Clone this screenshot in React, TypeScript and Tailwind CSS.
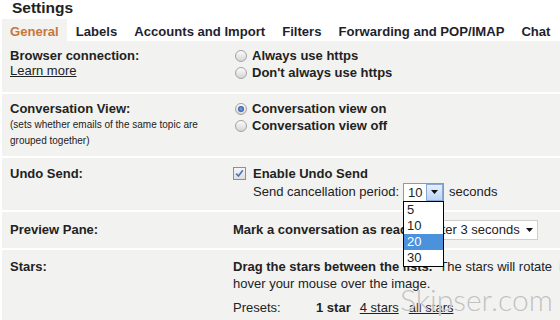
import React from "react";

const tabs = ["General", "Labels", "Accounts and Import", "Filters", "Forwarding and POP/IMAP", "Chat"];

function Radio({ checked }: { checked?: boolean }) {
  return (
    <span className="ml-[2px] mr-[5px] flex h-[12px] w-[12px] shrink-0 items-center justify-center rounded-full border border-[#a3a3a3] bg-linear-to-b from-[#fbfbfb] to-[#d6d6d6]">
      {checked && <span className="h-[6px] w-[6px] rounded-full bg-radial from-[#7fa9e6] to-[#173c84]" />}
    </span>
  );
}

function Arrow() {
  return (
    <svg width="7" height="4" viewBox="0 0 7 4">
      <polygon points="0,0 7,0 3.5,4" fill="#111" />
    </svg>
  );
}

export default function App() {
  return (
    <div className="relative h-[320px] w-[560px] overflow-hidden bg-white font-['Liberation_Sans',Arial,sans-serif] text-[13px] text-[#222]">
      <div className="h-[19px] pl-[12px] text-[15.5px] font-bold leading-[16px]">Settings</div>

      <div className="ml-[2px] flex h-[22px] gap-[1px] overflow-hidden whitespace-nowrap text-[13.1px] font-bold">
        {tabs.map((t, i) => (
          <div
            key={t}
            className={
              i === 0
                ? "shrink-0 bg-[#f2f2f0] px-[8px] pt-[4px] leading-[18px] text-[#c8773a]"
                : "shrink-0 px-[8px] pt-[4px] leading-[18px] text-[#1f1f2e]"
            }
          >
            {t}
          </div>
        ))}
      </div>

      <div className="ml-[2px] bg-[#f2f2f0]">
        {/* Browser connection */}
        <div className="grid grid-cols-[223px_1fr] border-b-2 border-white pb-[11px] pl-[8px] pt-[6px]">
          <div>
            <div className="font-bold leading-[17px]">Browser connection:</div>
            <a className="block leading-[14px] underline">Learn more</a>
          </div>
          <div className="font-bold">
            <div className="flex h-[17px] items-center">
              <Radio />
              Always use https
            </div>
            <div className="flex h-[17px] items-center">
              <Radio />
              Don't always use https
            </div>
          </div>
        </div>

        {/* Conversation view */}
        <div className="grid grid-cols-[223px_1fr] border-b-2 border-white pb-[7px] pl-[8px] pt-[6px]">
          <div>
            <div className="font-bold leading-[17px]">Conversation View:</div>
            <div className="text-[10px] leading-[16px]">
              (sets whether emails of the same topic are
              <br />
              grouped together)
            </div>
          </div>
          <div className="font-bold">
            <div className="flex h-[17px] items-center">
              <Radio checked />
              Conversation view on
            </div>
            <div className="flex h-[17px] items-center">
              <Radio />
              Conversation view off
            </div>
          </div>
        </div>

        {/* Undo send */}
        <div className="grid grid-cols-[223px_1fr] border-b-2 border-white pb-[8px] pl-[8px] pt-[7px]">
          <div className="font-bold leading-[17px]">Undo Send:</div>
          <div>
            <div className="flex h-[17px] items-center font-bold">
              <span className="mr-[7px] flex h-[13px] w-[13px] items-center justify-center border border-[#8e8f8f] bg-linear-to-b from-[#f6f6f6] to-[#dedede]">
                <svg width="9" height="9" viewBox="0 0 9 9">
                  <path d="M1.2 4.6 L3.5 7 L7.8 1.2" stroke="#5574b6" strokeWidth="1.7" fill="none" />
                </svg>
              </span>
              Enable Undo Send
            </div>
            <div className="flex h-[20px] items-center pl-[20px]">
              Send cancellation period:
              <div className="relative z-10 ml-[4px] flex h-[19px] w-[41px] border border-[#7f9db9] bg-white">
                <span className="flex-1 pl-[4px] leading-[17px]">10</span>
                <span className="flex w-[17px] items-center justify-center border border-[#89a9d6] bg-linear-to-b from-[#e6f0ff] to-[#bcd3f4]">
                  <Arrow />
                </span>
                <div className="absolute left-[-1px] top-[17px] w-[41px] border border-black bg-white">
                  <div className="h-[16px] pl-[3px] leading-[16px]">5</div>
                  <div className="h-[16px] pl-[3px] leading-[16px]">10</div>
                  <div className="h-[16px] bg-[#4b91dc] pl-[3px] leading-[16px] text-white">20</div>
                  <div className="h-[16px] pl-[3px] leading-[16px]">30</div>
                </div>
              </div>
              <span className="ml-[5px]">seconds</span>
            </div>
          </div>
        </div>

        {/* Preview pane */}
        <div className="grid grid-cols-[223px_1fr] border-b-2 border-white pb-[8px] pl-[8px] pt-[8px]">
          <div className="font-bold leading-[20px]">Preview Pane:</div>
          <div className="flex h-[20px] items-center">
            <span className="font-bold">Mark a conversation as read</span>
            <div className="ml-[19px] flex h-[20px] w-[111px] items-center justify-between border border-[#cfcfcf] bg-white pl-[3px] pr-[4px]">
              <span>after 3 seconds</span>
              <Arrow />
            </div>
          </div>
        </div>

        {/* Stars */}
        <div className="grid grid-cols-[223px_1fr] pb-[10px] pl-[8px] pt-[8px]">
          <div className="font-bold leading-[17px]">Stars:</div>
          <div>
            <div className="whitespace-nowrap leading-[17px]">
              <b>Drag the stars between the lists.</b>&nbsp; The stars will rotate&nbsp; in the order shown below when
              you click successively. To learn the name of a star,
            </div>
            <div className="leading-[17px]">hover your mouse over the image.</div>
            <div className="mt-[7px] flex leading-[17px]">
              <span className="w-[83px]">Presets:</span>
              <b>1 star</b>
              <a className="ml-[9px] underline">4 stars</a>
              <a className="ml-[10px] underline">all stars</a>
            </div>
          </div>
        </div>
      </div>

      <div className="absolute left-[400px] top-[280px] font-['Lato',sans-serif] text-[30px] font-light leading-[38px] text-[#c0c0c0] [text-shadow:0_0_1px_#fff]">
        Skipser.com
      </div>
    </div>
  );
}
